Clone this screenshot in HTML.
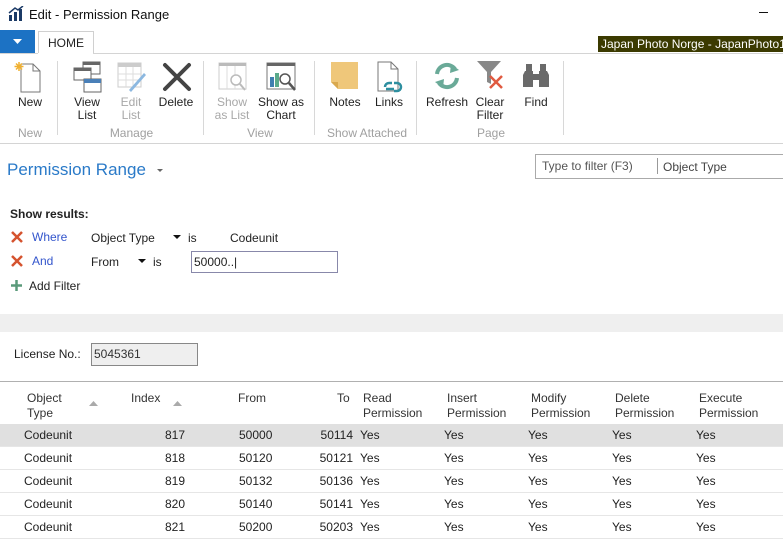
<!DOCTYPE html>
<html><head><meta charset="utf-8"><style>
*{margin:0;padding:0;box-sizing:border-box}
body{width:783px;height:542px;overflow:hidden;background:#fff;font-family:"Liberation Sans",sans-serif;font-size:12px;color:#222;position:relative}
.a{position:absolute;white-space:nowrap}
.lbl{position:absolute;text-align:center;line-height:13px;font-size:12px;color:#222}
.dis{color:#a8a8a8}
.grp{position:absolute;top:126px;font-size:12px;color:#a0a0a0;text-align:center}
.sep{position:absolute;top:61px;width:1px;height:74px;background:#d8d8d8}
.hdr{position:absolute;top:391px;line-height:15px;color:#333}
.row{position:absolute;left:0;width:783px;height:23px;border-bottom:1px solid #e6e6e6}
.row span{position:absolute;top:4px}
</style></head><body>
<svg class="a" style="left:8px;top:6px" width="16" height="16" viewBox="0 0 16 16"><rect x="1" y="9" width="3" height="6" fill="#1b3a66"/><rect x="6" y="6" width="3" height="9" fill="#1b3a66"/><rect x="11" y="3" width="3" height="12" fill="#1b3a66"/><path d="M1 7 L7 2 L10 4 L15 0" stroke="#1b3a66" stroke-width="1.5" fill="none"/></svg>
<div class="a" style="left:29px;top:7px;font-size:13px;color:#111">Edit - Permission Range</div>
<div class="a" style="left:759px;top:12px;width:9px;height:1px;background:#111"></div>
<div class="a" style="left:0;top:30px;width:35px;height:23px;background:#1c72c4"></div>
<svg class="a" style="left:13px;top:39px" width="9" height="5"><path d="M0 0H9L4.5 5Z" fill="#fff"/></svg>
<div class="a" style="left:38px;top:31px;width:56px;height:23px;border:1px solid #d0d0d0;border-bottom:none;background:#fff;text-align:center;line-height:22px;color:#222">HOME</div>
<div class="a" style="left:0;top:53px;width:783px;height:1px;background:#d4d4d4"></div>
<div class="a" style="left:38px;top:53px;width:55px;height:1px;background:#fff"></div>
<div class="a" style="left:598px;top:36px;width:185px;height:16px;background:#3b3a00;color:#fff;line-height:16px;padding-left:3px">Japan Photo Norge - JapanPhoto1</div>
<svg class="a" style="left:13px;top:60px" width="30" height="34"><path d="M8 4H20L27 11V32H8Z" fill="#fff" stroke="#777"/><path d="M20 4V11H27" fill="none" stroke="#777"/><g stroke="#f0b030" stroke-width="1.5"><path d="M6 2V11M1.5 6.5H10.5M3 3.5L9 9.5M9 3.5L3 9.5"/></g></svg>
<div class="lbl" style="left:10px;top:96px;width:40px">New</div>
<div class="grp" style="left:10px;width:40px">New</div>
<div class="sep" style="left:57px"></div>
<svg class="a" style="left:73px;top:61px" width="30" height="32"><rect x="10" y="1" width="17" height="12" fill="#fff" stroke="#666"/><rect x="10" y="1" width="17" height="3" fill="#666"/><rect x="1" y="7" width="17" height="12" fill="#fff" stroke="#666"/><rect x="1" y="7" width="17" height="3" fill="#666"/><rect x="11" y="18" width="17" height="13" fill="#fff" stroke="#666"/><rect x="11" y="18" width="17" height="4" fill="#4a80b8"/></svg>
<div class="lbl" style="left:66px;top:96px;width:42px">View<br>List</div>
<svg class="a" style="left:117px;top:62px" width="30" height="32"><rect x="1" y="1" width="23" height="24" fill="#fff" stroke="#ccc"/><rect x="1" y="1" width="23" height="4" fill="#ccc"/><path d="M1 12H24M1 18H24M9 5V25M16 5V25" stroke="#ddd"/><path d="M12 28L27 11L29 13L14 30Z" fill="#8cb8e0"/></svg>
<div class="lbl dis" style="left:110px;top:96px;width:42px">Edit<br>List</div>
<svg class="a" style="left:162px;top:62px" width="30" height="30"><path d="M3 3L27 27M27 3L3 27" stroke="#444" stroke-width="4" stroke-linecap="round"/></svg>
<div class="lbl" style="left:155px;top:96px;width:42px">Delete</div>
<div class="grp" style="left:60px;width:143px">Manage</div>
<div class="sep" style="left:203px"></div>
<svg class="a" style="left:218px;top:62px" width="32" height="32"><rect x="1" y="1" width="27" height="26" fill="#fff" stroke="#ccc"/><rect x="1" y="1" width="27" height="3" fill="#bbb"/><path d="M9 4V27M17 4V27" stroke="#ddd"/><circle cx="18" cy="18" r="5" fill="#fff" stroke="#bbb" stroke-width="1.5"/><path d="M22 22L27 28" stroke="#bbb" stroke-width="2"/></svg>
<div class="lbl dis" style="left:210px;top:96px;width:44px">Show<br>as List</div>
<svg class="a" style="left:266px;top:62px" width="32" height="32"><rect x="1" y="1" width="28" height="26" fill="#fff" stroke="#777"/><rect x="1" y="1" width="28" height="3" fill="#666"/><rect x="4" y="15" width="4" height="10" fill="#3f7fb0"/><rect x="9" y="11" width="4" height="14" fill="#5aaa8a"/><circle cx="19" cy="17" r="5" fill="#fff" stroke="#555" stroke-width="1.5"/><path d="M23 21L29 28" stroke="#555" stroke-width="2.5"/></svg>
<div class="lbl" style="left:256px;top:96px;width:50px">Show as<br>Chart</div>
<div class="grp" style="left:204px;width:112px">View</div>
<div class="sep" style="left:314px"></div>
<svg class="a" style="left:330px;top:61px" width="30" height="30"><path d="M1 1H28V28H8L1 21Z" fill="#efc77a"/><path d="M1 21H8V28Z" fill="#d9a94f"/></svg>
<div class="lbl" style="left:324px;top:96px;width:42px">Notes</div>
<svg class="a" style="left:376px;top:61px" width="30" height="34"><path d="M2 1H15L22 8V30H2Z" fill="#fff" stroke="#777"/><path d="M15 1V8H22" fill="none" stroke="#777"/><path d="M9 26a4 4 0 0 1 4-4h3M18 22h3a4 4 0 0 1 0 8h-3M10 28h8" stroke="#2e8fa0" stroke-width="2.5" fill="none"/></svg>
<div class="lbl" style="left:368px;top:96px;width:42px">Links</div>
<div class="grp" style="left:316px;width:102px">Show Attached</div>
<div class="sep" style="left:416px"></div>
<svg class="a" style="left:433px;top:62px" width="28" height="28"><path d="M4 12A10 10 0 0 1 22 7" stroke="#6aaa98" stroke-width="4" fill="none"/><path d="M18 2L26 8L17 11Z" fill="#6aaa98"/><path d="M24 16A10 10 0 0 1 6 21" stroke="#6aaa98" stroke-width="4" fill="none"/><path d="M10 26L2 20L11 17Z" fill="#6aaa98"/></svg>
<div class="lbl" style="left:424px;top:96px;width:46px">Refresh</div>
<svg class="a" style="left:476px;top:60px" width="32" height="32"><path d="M1 1H25L15 12V24L11 22V12Z" fill="#888"/><path d="M14 16L26 28M26 16L14 28" stroke="#e05a40" stroke-width="2.5"/></svg>
<div class="lbl" style="left:470px;top:96px;width:40px">Clear<br>Filter</div>
<svg class="a" style="left:522px;top:62px" width="28" height="26"><path d="M3 9h8V25H1V13ZM17 9h8l2 4V25H17Z" fill="#6a6a6a"/><rect x="4" y="2" width="6" height="7" fill="#6a6a6a"/><rect x="18" y="2" width="6" height="7" fill="#6a6a6a"/><rect x="11" y="12" width="6" height="6" fill="#6a6a6a"/></svg>
<div class="lbl" style="left:516px;top:96px;width:40px">Find</div>
<div class="grp" style="left:418px;width:146px">Page</div>
<div class="sep" style="left:563px"></div>
<div class="a" style="left:0;top:143px;width:783px;height:1px;background:#d4d4d4"></div>
<div class="a" style="left:7px;top:160px;font-size:17px;color:#2a7ac8">Permission Range</div>
<svg class="a" style="left:157px;top:169px" width="6" height="3"><path d="M0 0H6L3 3Z" fill="#666"/></svg>
<div class="a" style="left:535px;top:154px;width:250px;height:25px;border:1px solid #aaa"></div>
<div class="a" style="left:542px;top:159px;color:#555">Type to filter (F3)</div>
<div class="a" style="left:657px;top:158px;width:1px;height:16px;background:#999"></div>
<div class="a" style="left:663px;top:160px;color:#444">Object Type</div>
<div class="a" style="left:10px;top:207px;font-weight:bold">Show results:</div>
<svg class="a" style="left:11px;top:231px" width="12" height="12"><path d="M1 1L11 11M11 1L1 11" stroke="#d5532f" stroke-width="2.5"/></svg>
<div class="a" style="left:32px;top:230px;color:#3355cc">Where</div>
<div class="a" style="left:91px;top:231px">Object Type</div>
<svg class="a" style="left:173px;top:235px" width="8" height="4"><path d="M0 0H8L4 4Z" fill="#111"/></svg>
<div class="a" style="left:188px;top:231px">is</div>
<div class="a" style="left:230px;top:231px">Codeunit</div>
<svg class="a" style="left:11px;top:255px" width="12" height="12"><path d="M1 1L11 11M11 1L1 11" stroke="#d5532f" stroke-width="2.5"/></svg>
<div class="a" style="left:32px;top:254px;color:#3355cc">And</div>
<div class="a" style="left:91px;top:255px">From</div>
<svg class="a" style="left:138px;top:259px" width="8" height="4"><path d="M0 0H8L4 4Z" fill="#111"/></svg>
<div class="a" style="left:153px;top:255px">is</div>
<div class="a" style="left:191px;top:251px;width:147px;height:22px;border:1px solid #8888aa;padding:3px 2px">50000..|</div>
<svg class="a" style="left:11px;top:280px" width="11" height="11"><path d="M5.5 0V11M0 5.5H11" stroke="#5a9a7a" stroke-width="2.5"/></svg>
<div class="a" style="left:29px;top:279px">Add Filter</div>
<div class="a" style="left:0;top:314px;width:783px;height:18px;background:#efefef"></div>
<div class="a" style="left:14px;top:347px">License No.:</div>
<div class="a" style="left:91px;top:343px;width:107px;height:23px;border:1px solid #888;background:#efefef;padding:3px 2px;color:#333">5045361</div>
<div class="a" style="left:0;top:381px;width:783px;height:1px;background:#b0b0b0"></div>
<div class="hdr" style="left:27px">Object<br>Type</div>
<svg class="a" style="left:89px;top:401px" width="9" height="5"><path d="M0 5H9L4.5 0Z" fill="#aaa"/></svg>
<div class="hdr" style="left:131px">Index</div>
<svg class="a" style="left:173px;top:401px" width="9" height="5"><path d="M0 5H9L4.5 0Z" fill="#aaa"/></svg>
<div class="hdr" style="left:238px">From</div>
<div class="hdr" style="left:337px">To</div>
<div class="hdr" style="left:363px">Read<br>Permission</div>
<div class="hdr" style="left:447px">Insert<br>Permission</div>
<div class="hdr" style="left:531px">Modify<br>Permission</div>
<div class="hdr" style="left:615px">Delete<br>Permission</div>
<div class="hdr" style="left:699px">Execute<br>Permission</div>
<div class="row" style="top:424px;background:#e0e0e0"><span style="left:24px">Codeunit</span><span style="right:598px">817</span><span style="left:239px">50000</span><span style="right:430px">50114</span><span style="left:360px">Yes</span><span style="left:444px">Yes</span><span style="left:528px">Yes</span><span style="left:612px">Yes</span><span style="left:696px">Yes</span></div>
<div class="row" style="top:447px"><span style="left:24px">Codeunit</span><span style="right:598px">818</span><span style="left:239px">50120</span><span style="right:430px">50121</span><span style="left:360px">Yes</span><span style="left:444px">Yes</span><span style="left:528px">Yes</span><span style="left:612px">Yes</span><span style="left:696px">Yes</span></div>
<div class="row" style="top:470px"><span style="left:24px">Codeunit</span><span style="right:598px">819</span><span style="left:239px">50132</span><span style="right:430px">50136</span><span style="left:360px">Yes</span><span style="left:444px">Yes</span><span style="left:528px">Yes</span><span style="left:612px">Yes</span><span style="left:696px">Yes</span></div>
<div class="row" style="top:493px"><span style="left:24px">Codeunit</span><span style="right:598px">820</span><span style="left:239px">50140</span><span style="right:430px">50141</span><span style="left:360px">Yes</span><span style="left:444px">Yes</span><span style="left:528px">Yes</span><span style="left:612px">Yes</span><span style="left:696px">Yes</span></div>
<div class="row" style="top:516px"><span style="left:24px">Codeunit</span><span style="right:598px">821</span><span style="left:239px">50200</span><span style="right:430px">50203</span><span style="left:360px">Yes</span><span style="left:444px">Yes</span><span style="left:528px">Yes</span><span style="left:612px">Yes</span><span style="left:696px">Yes</span></div>
</body></html>
